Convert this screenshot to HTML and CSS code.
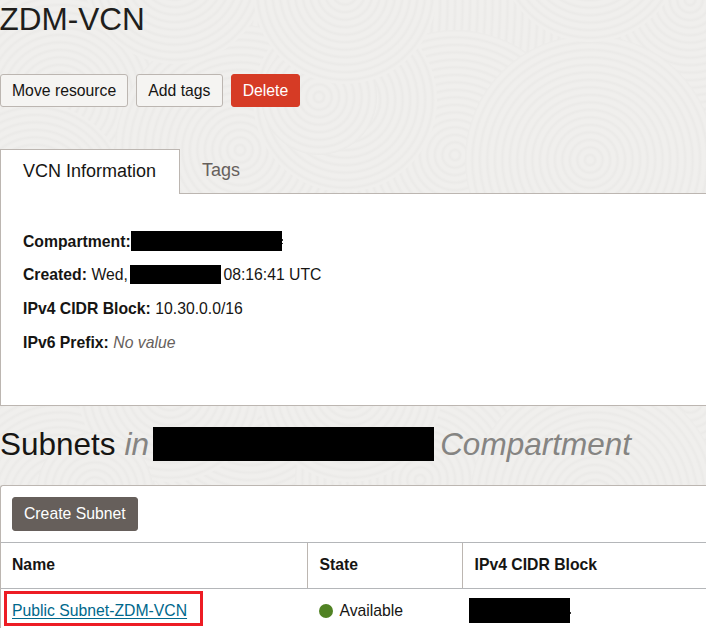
FILE: index.html
```html
<!DOCTYPE html>
<html lang="en">
<head>
<meta charset="utf-8">
<title>ZDM-VCN</title>
<link rel="stylesheet" href="styles.css">
</head>
<body>
<svg class="texture" viewBox="0 0 706 628" aria-hidden="true">
  <defs>
    <radialGradient id="rings" gradientUnits="userSpaceOnUse" cx="0" cy="0" r="7.5" spreadMethod="repeat">
      <stop offset="0" stop-color="#f0efed"/>
      <stop offset=".35" stop-color="#f0efed"/>
      <stop offset=".7" stop-color="#ebeae8"/>
      <stop offset="1" stop-color="#f0efed"/>
    </radialGradient>
    <circle id="big" r="125" fill="url(#rings)"/>
    <circle id="mid" r="92" fill="url(#rings)"/>
    <circle id="small" r="58" fill="url(#rings)"/>
  </defs>
  <rect width="706" height="628" fill="url(#rings)"/>
  <use href="#big" x="60" y="100"/>
  <use href="#big" x="240" y="150"/>
  <use href="#big" x="455" y="155"/>
  <use href="#big" x="690" y="0"/>
  <use href="#big" x="590" y="160"/>
  <use href="#mid" x="175" y="-28"/>
  <use href="#mid" x="590" y="-50"/>
  <use href="#mid" x="35" y="195"/>
  <use href="#mid" x="345" y="100"/>
  <use href="#small" x="319" y="97"/>
  <use href="#mid" x="345" y="-8"/>
  <use href="#big" x="60" y="500"/>
  <use href="#big" x="250" y="400"/>
  <use href="#big" x="420" y="480"/>
  <use href="#mid" x="690" y="400"/>
  <use href="#mid" x="170" y="390"/>
  <use href="#mid" x="350" y="390"/>
  <use href="#big" x="595" y="500"/>
  <use href="#small" x="95" y="490"/>
</svg>
<main class="page">
  <h1 class="title">ZDM-VCN</h1>
  <div class="actions">
    <button class="btn">Move resource</button>
    <button class="btn tags">Add tags</button>
    <button class="btn danger">Delete</button>
  </div>
  <nav class="tabs">
    <span class="tab active">VCN Information</span>
    <span class="tab">Tags</span>
  </nav>
  <section class="info">
    <div class="row"><b class="first">Compartment:</b><span class="mask mask-compartment"></span><i class="speck"></i></div>
    <div class="row"><b>Created:</b><span class="value">Wed,</span><span class="mask mask-date"></span><span class="time">08:16:41 UTC</span></div>
    <div class="row"><b>IPv4 CIDR Block:</b><span class="value">10.30.0.0/16</span></div>
    <div class="row"><b>IPv6 Prefix:</b><em class="value empty">No value</em></div>
  </section>
  <h2 class="subtitle"><span>Subnets</span><em class="in">in</em><span class="mask mask-heading"></span><em>Compartment</em></h2>
  <section class="subnets">
    <div class="toolbar"><button class="btn primary">Create Subnet</button></div>
    <div class="grid head"><div class="cell">Name</div><div class="cell">State</div><div class="cell">IPv4 CIDR Block</div></div>
    <div class="grid body">
      <div class="name"><a href="#" class="link">Public Subnet-ZDM-VCN</a></div>
      <div class="state"><span class="dot"></span>Available</div>
      <div class="cidr"><span class="mask mask-cidr"></span><i class="speck"></i></div>
    </div>
  </section>
</main>
</body>
</html>
```
FILE: styles.css
```css
* { box-sizing: border-box; }
html, body { margin: 0; height: 628px; overflow: hidden; }
body {
  position: relative;
  background: #f0efed;
  color: #161513;
  font: 15.75px/20px "Liberation Sans", Arial, sans-serif;
}
.texture { position: absolute; left: 0; top: 0; width: 706px; height: 628px; }
.page { position: relative; }
.title {
  margin: 0 0 0 -.5px;
  height: 74px;
  padding-top: 1px;
  font-size: 31.5px;
  line-height: 36px;
  font-weight: 400;
  color: #201e1c;
}
.actions { display: flex; gap: 8px; height: 75px; }
.btn {
  height: 33px;
  padding: 0 11px;
  border: 1px solid #bcb6b1;
  border-radius: 3px;
  background: #f5f4f2;
  color: #161513;
  font: inherit;
  white-space: nowrap;
}
.tags { width: 86.5px; }
.danger { background: #d63b25; border-color: #d63b25; color: #fff; }
.primary { height: 34px; background: #665f5b; border-color: #665f5b; color: #fff; }
.tabs {
  display: flex;
  height: 45px;
  border-bottom: 1px solid #bcb6b1;
  font-size: 18px;
  color: #66605c;
}
.tab { height: 44px; padding: 0 22px; line-height: 42px; }
.tab.active {
  width: 180px;
  height: 45px;
  line-height: 43px;
  border: 1px solid #bcb6b1;
  border-bottom: 0;
  background: #fff;
  color: #161513;
}
.info {
  height: 212px;
  padding: 30.5px 22px 0;
  background: #fff;
  border: 1px solid #bcb6b1;
  border-width: 0 0 1px 1px;
}
.row { display: flex; align-items: center; height: 33.75px; white-space: nowrap; }
.first { padding-top: 1px; }
.value { margin-left: 4.5px; }
.empty { color: #66605c; }
.mask { flex: none; background: #000; }
.mask-compartment { width: 151px; height: 20px; }
.mask-date { width: 91px; height: 19px; margin: 0 0 1px 2px; }
.time { margin-left: 2.5px; }
.speck { width: 1px; height: 5px; border: solid #333; border-width: 2px 0 1px; }
.subtitle {
  display: flex;
  align-items: center;
  height: 79px;
  margin: 0;
  padding-bottom: 4px;
  font-size: 31.5px;
  font-weight: 400;
}
.subtitle em { color: #858482; }
.in { margin-left: 9px; }
.mask-heading { width: 281px; height: 34px; margin: 0 6px 0 4px; }
.subnets {
  height: 150px;
  background: #fff;
  border: 1px solid #bcb6b1;
  border-width: 1px 0 0 1px;
  border-top-left-radius: 3px;
}
.toolbar { height: 56px; padding: 11px; }
.grid { display: grid; grid-template-columns: 307px 155px 1fr; }
.head { height: 47px; border: solid #b4b6b9; border-width: 1px 0; font-weight: 700; }
.cell { padding: 12px 11px 0 11.5px; border-right: 1px solid #bcb6b1; }
.cell:first-child { padding-left: 11px; }
.cell:last-child { border-right: 0; }
.body { height: 46px; }
.name {
  width: 199px;
  height: 35px;
  margin: 2px 0 0 3px;
  padding: 7px 0 0 5px;
  border: 3px solid #ed1c24;
}
.link { color: #00688c; text-decoration: underline; text-underline-offset: 2px; }
.state { display: flex; align-items: center; height: 43px; padding-left: 10.5px; }
.dot { width: 14px; height: 14px; margin-right: 7px; border-radius: 50%; background: #508223; }
.cidr { display: flex; align-items: center; height: 43px; padding-left: 6px; }
.mask-cidr { width: 101px; height: 25px; }
.cidr .speck { height: 2px; border: 0; background: #333; margin-top: 5px; }
```
